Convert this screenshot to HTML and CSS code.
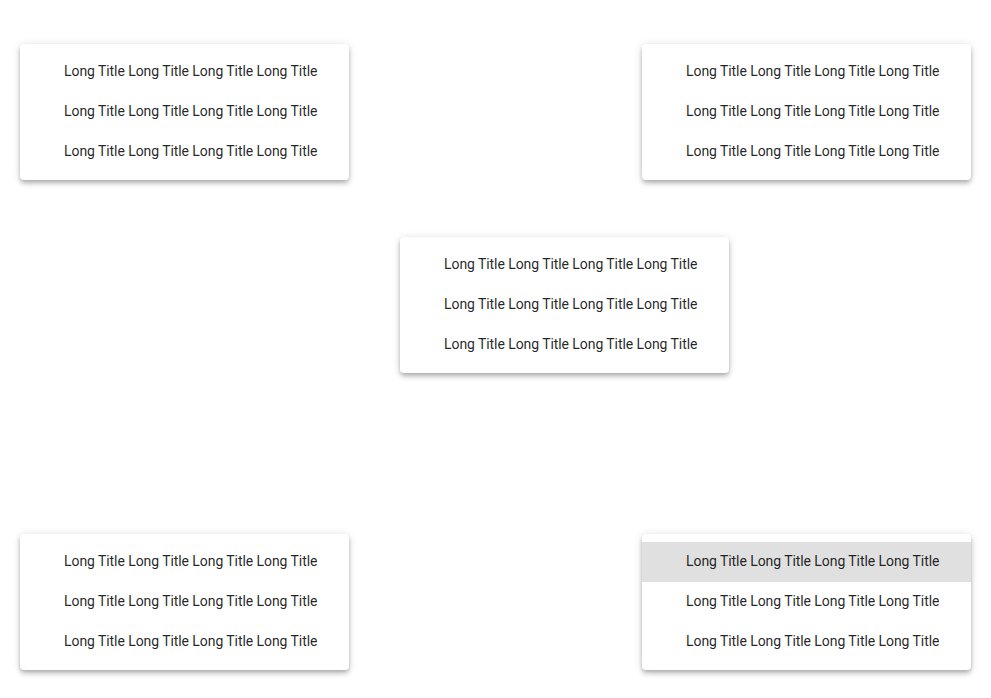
FILE: index.html
```html
<!DOCTYPE html>
<html>
<head>
<meta charset="utf-8">
<link rel="stylesheet" href="styles.css">
</head>
<body>
<div class="page">
  <div class="row row-top">
    <div class="menu">
      <div class="item">Long Title Long Title Long Title Long Title</div>
      <div class="item">Long Title Long Title Long Title Long Title</div>
      <div class="item">Long Title Long Title Long Title Long Title</div>
    </div>
    <div class="menu">
      <div class="item">Long Title Long Title Long Title Long Title</div>
      <div class="item">Long Title Long Title Long Title Long Title</div>
      <div class="item">Long Title Long Title Long Title Long Title</div>
    </div>
  </div>
  <div class="row row-middle">
    <div class="menu">
      <div class="item">Long Title Long Title Long Title Long Title</div>
      <div class="item">Long Title Long Title Long Title Long Title</div>
      <div class="item">Long Title Long Title Long Title Long Title</div>
    </div>
  </div>
  <div class="row row-bottom">
    <div class="menu">
      <div class="item">Long Title Long Title Long Title Long Title</div>
      <div class="item">Long Title Long Title Long Title Long Title</div>
      <div class="item">Long Title Long Title Long Title Long Title</div>
    </div>
    <div class="menu">
      <div class="item item-active">Long Title Long Title Long Title Long Title</div>
      <div class="item">Long Title Long Title Long Title Long Title</div>
      <div class="item">Long Title Long Title Long Title Long Title</div>
    </div>
  </div>
</div>
</body>
</html>
```
FILE: styles.css
```css
html, body {
  margin: 0;
  padding: 0;
  background: #fff;
}
.page {
  min-height: 698px;
  box-sizing: border-box;
  padding: 44px 20px 0 20px;
  font-family: Roboto, "Liberation Sans", sans-serif;
  font-size: 14px;
  letter-spacing: -0.07px;
  color: rgba(0, 0, 0, 0.87);
}
.row {
  display: flex;
  justify-content: space-between;
}
.row-middle {
  margin-top: 57px;
  padding-left: 380px;
  justify-content: flex-start;
}
.row-bottom {
  margin-top: 161px;
}
.menu {
  width: 329px;
  box-sizing: border-box;
  padding: 8px 0;
  background: #fff;
  border-radius: 4px;
  box-shadow: 0 2px 4px -1px rgba(0,0,0,.2), 0 4px 5px 0 rgba(0,0,0,.14), 0 1px 10px 0 rgba(0,0,0,.12);
}
.item {
  height: 40px;
  line-height: 38px;
  padding: 0 16px 0 44px;
  white-space: nowrap;
}
.item-active {
  background: #e0e0e0;
}
```
